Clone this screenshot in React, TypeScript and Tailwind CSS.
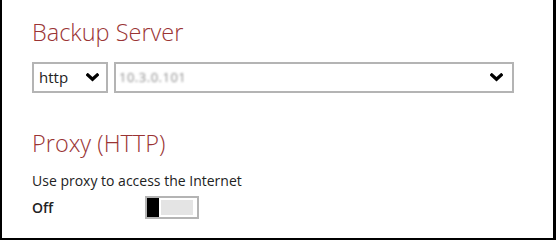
import React from 'react';

const Chevron: React.FC = () => (
  <svg width="13" height="9" viewBox="0 0 13 9" className="shrink-0">
    <path d="M1.8 2 L6.5 6.3 L11.2 2" fill="none" stroke="#000" strokeWidth="3.2" strokeLinecap="square" />
  </svg>
);

const App: React.FC = () => {
  return (
    <div
      className="w-[556px] h-[240px] bg-white border-l-2 border-r-[3px] border-b-2 border-black pl-[30px] pt-4 text-[#222]"
      style={{ fontFamily: '"Open Sans", "Liberation Sans", sans-serif' }}
    >
      {/* Backup Server */}
      <h1 className="text-[23.5px] leading-[32px] font-light text-[#9a3434]">Backup Server</h1>
      <div className="mt-[14px] flex gap-[6px]">
        <div className="w-[76px] h-[31px] border-2 border-[#b4b4b4] flex items-center justify-between pl-[5px] pr-[7px]">
          <span className="text-[15px]">http</span>
          <Chevron />
        </div>
        <div className="w-[400px] h-[31px] border-2 border-[#b4b4b4] flex items-center justify-between pl-[3px] pr-[9px]">
          <span className="text-[13px] tracking-[0.5px] text-[#8e8e8e] blur-[1.3px]">10.3.0.101</span>
          <Chevron />
        </div>
      </div>

      {/* Proxy */}
      <h2 className="mt-[34px] text-[23.5px] leading-[32px] font-light text-[#9a3434]">Proxy (HTTP)</h2>
      <p className="mt-[12px] text-[14px] leading-[20px]">Use proxy to access the Internet</p>
      <div className="mt-[5px] flex items-center">
        <span className="w-[113px] text-[14px] font-semibold">Off</span>
        <div className="w-[54px] h-[23px] border-2 border-[#b4b4b4] flex items-stretch">
          <div className="w-[12px] bg-black" />
          <div className="flex-1 my-[2px] ml-[2px] mr-[4px] bg-[#e4e4e4]" />
        </div>
      </div>
    </div>
  );
};

export default App;
